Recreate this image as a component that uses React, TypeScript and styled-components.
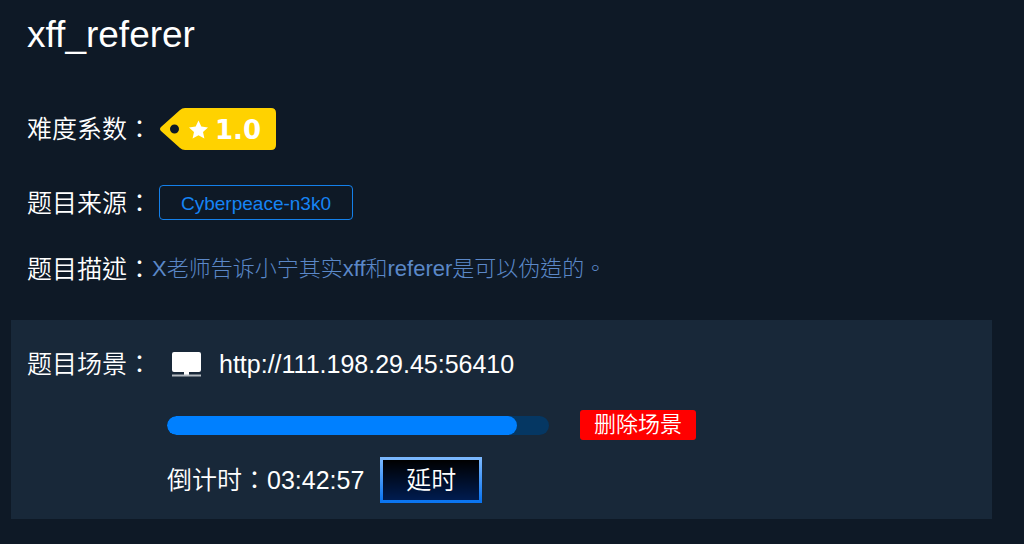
import React from "react";
import styled, { createGlobalStyle } from "styled-components";

const GlobalStyle = createGlobalStyle`
  *, *::before, *::after { box-sizing: border-box; }
  body {
    margin: 0;
    min-height: 100vh;
    background: #0e1926;
    color: #fff;
    font-family: "Liberation Sans", "Noto Sans CJK TC", sans-serif;
    font-size: 25px;
    font-weight: 350;
    line-height: 36px;
  }
`;

const Page = styled.main`
  padding: 13px 32px 24px 11px;
`;

const Overview = styled.section`
  display: flex;
  flex-direction: column;
  padding-left: 16px;
`;

const Title = styled.h1`
  margin: 0 0 46px;
  font-size: 37px;
  font-weight: 400;
  line-height: 44px;
`;

const Row = styled.div<{ $height: number }>`
  display: flex;
  align-items: center;
  min-height: ${({ $height }) => $height}px;
`;

const Label = styled.span`
  flex: none;
  width: 125px;
  white-space: nowrap;
`;

const DifficultyTag = styled.svg`
  flex: none;
  margin-left: 8px;
`;

const TagText = styled.text`
  font-family: "DejaVu Sans", sans-serif;
  font-size: 26px;
  font-weight: 700;
`;

const SourceLink = styled.a`
  margin-left: 7px;
  padding: 2px 21px 0;
  border: 1px solid #1480ea;
  border-radius: 4px;
  color: #1684f5;
  font-size: 19px;
  line-height: 31px;
  text-decoration: none;
`;

const Description = styled.p`
  margin: 0;
  color: #5b88c8;
  font-size: 22px;
  font-weight: 300;
`;

const Scene = styled.section`
  display: flex;
  flex-direction: column;
  margin-top: 32px;
  padding: 15px 16px 16px;
  background: #182839;
`;

const Details = styled.div`
  display: flex;
  flex-direction: column;
  padding-left: 140px;
`;

const ComputerIcon = styled.svg`
  flex: none;
  margin: 0 17px 0 20px;
`;

const SceneLink = styled.a`
  color: #fff;
  text-decoration: none;
`;

const Progress = styled.div`
  width: 382px;
  height: 19px;
  overflow: hidden;
  border-radius: 10px;
  background: #053763;
`;

const ProgressFill = styled.div`
  height: 100%;
  border-radius: 10px;
  background: #0080ff;
`;

const DeleteButton = styled.button`
  margin-left: 31px;
  padding: 0 14px;
  border: 0;
  border-radius: 3px;
  background: #f00;
  color: #fff;
  font: inherit;
  font-size: 22px;
  line-height: 30px;
  cursor: pointer;
`;

const ExtendButton = styled.button`
  margin-left: 16px;
  padding: 0 23px;
  border: 3px solid;
  border-image: linear-gradient(#7ab8ff, #0a74f0) 1;
  background: linear-gradient(#000, #001c50);
  color: #fff;
  font: inherit;
  line-height: 40px;
  cursor: pointer;
`;

export default function App() {
  const remaining = 350 / 382;
  return (
    <>
      <GlobalStyle />
      <Page lang="zh-Hant">
        <Overview>
          <Title>xff_referer</Title>
          <Row $height={52}>
            <Label>难度系数：</Label>
            <DifficultyTag width="118" height="44" viewBox="0 0 118 44" role="img" aria-label="1.0">
              <path
                fill="#ffd200"
                fillRule="evenodd"
                d="M1 20 20 3Q22 1 25 1H111Q116 1 116 6V38Q116 43 111 43H25Q22 43 20 41L1 24Q-1 22 1 20ZM14.500 17.500a4.500 4.500 0 1 0 0 9 4.500 4.500 0 1 0 0-9Z"
              />
              <path fill="#fff" d="m38.500 13.500 2.800 6.100 6.700.8-5 4.500 1.400 6.700-5.900-3.400-5.900 3.400 1.400-6.700-5-4.500 6.700-.8Z" />
              <TagText x="55" y="32" fill="#fff">1.0</TagText>
            </DifficultyTag>
          </Row>
          <Row $height={95}>
            <Label>题目来源：</Label>
            <SourceLink href="#source">Cyberpeace-n3k0</SourceLink>
          </Row>
          <Row $height={38}>
            <Label>题目描述：</Label>
            <Description>X老师告诉小宁其实xff和referer是可以伪造的。</Description>
          </Row>
        </Overview>
        <Scene>
          <Row $height={58}>
            <Label>题目场景：</Label>
            <ComputerIcon width="30" height="26" viewBox="0 0 30 26" aria-hidden="true">
              <path fill="#fff" d="M2 1H27Q29 1 29 3V19Q29 21 27 21H17V24H12V21H2Q0 21 0 19V3Q0 1 2 1Z" />
              <path fill="#b4bac1" d="M0 23.500H29V25.500H0Z" />
            </ComputerIcon>
            <SceneLink href="http://111.198.29.45:56410">http://111.198.29.45:56410</SceneLink>
          </Row>
          <Details>
            <Row $height={64}>
              <Progress role="progressbar" aria-valuemin={0} aria-valuemax={100} aria-valuenow={92} aria-label="倒计时">
                <ProgressFill style={{ width: `${remaining * 100}%` }} />
              </Progress>
              <DeleteButton type="button">删除场景</DeleteButton>
            </Row>
            <Row $height={46}>
              <span>倒计时：03:42:57</span>
              <ExtendButton type="button">延时</ExtendButton>
            </Row>
          </Details>
        </Scene>
      </Page>
    </>
  );
}
